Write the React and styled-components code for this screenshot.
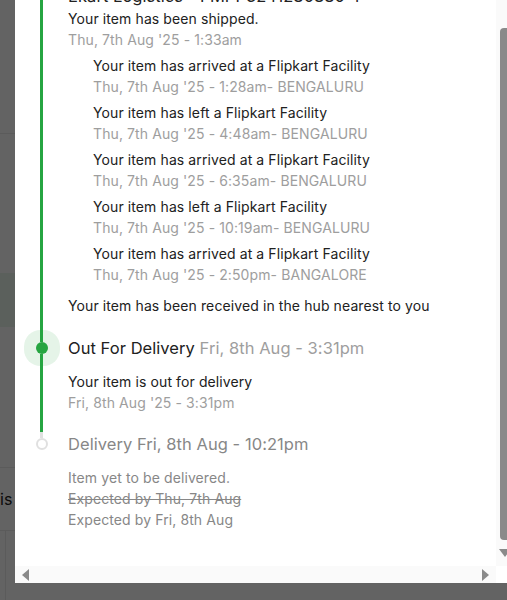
import React, { useLayoutEffect, useRef } from "react";
import styled, { createGlobalStyle, css } from "styled-components";

const GlobalStyle = createGlobalStyle`
  html, body { margin: 0; padding: 0; height: 100%; overflow: hidden; }
  body { background: #fff; font-family: Inter, "Noto Sans", sans-serif; color: #212121; }
  * { box-sizing: border-box; }
`;

const GREEN = "#26a541";
const BAR = "#8a8a8a";
const TRACK = "#fafafa";

/* ---------- page behind the modal ---------- */
const Page = styled.div`
  display: flex;
  flex-direction: column;
  height: 600px;
`;

const PageBand = styled.div`
  flex: ${(p) => (p.$h ? "none" : 1)};
  height: ${(p) => (p.$h ? `${p.$h}px` : "auto")};
  background: ${(p) => p.$tint || "#fff"};
  border-bottom: ${(p) => (p.$line ? "1px solid #ebebeb" : "none")};
  display: flex;
  align-items: center;
  font-size: 16px;
  color: #212121;
`;

const PageCell = styled.div`
  width: 6px;
  align-self: stretch;
  border-right: 1px solid #ebebeb;
`;

const Overlay = styled.div`
  position: fixed;
  inset: 0;
  background: rgba(0, 0, 0, 0.61);
`;

/* ---------- modal ---------- */
const Panel = styled.div`
  position: fixed;
  left: 15px;
  top: -67px;
  bottom: 17px;
  width: 498px;
  background: #fff;
  display: grid;
  grid-template-columns: 1fr 17px;
  grid-template-rows: 1fr 17px;
`;

const Viewport = styled.div`
  overflow: hidden;
  min-height: 0;
`;

/* scrollbars */
const VBar = styled.div`
  display: flex;
  flex-direction: column;
  background: ${TRACK};
`;

const VTrack = styled.div`
  flex: 1;
  display: flex;
  flex-direction: column;
  justify-content: flex-end;
  padding: 0 2px 0 4px;
`;

const VThumb = styled.div`
  height: ${(p) => p.$size}px;
  background: ${BAR};
  border-radius: 4px;
`;

const VButton = styled.div`
  flex: none;
  height: ${(p) => p.$h}px;
  display: flex;
  justify-content: center;
  align-items: flex-start;
  padding-top: ${(p) => p.$pad}px;
`;

const HBar = styled.div`
  display: flex;
  align-items: stretch;
  background: ${TRACK};
`;

const HTrack = styled.div`
  flex: 1;
`;

const HButton = styled.div`
  flex: none;
  width: 17px;
  display: flex;
  align-items: center;
  padding-left: ${(p) => p.$pad}px;
`;

const Corner = styled.div`
  background: #fff;
`;

const arrows = {
  up: css`
    border-left: 6px solid transparent;
    border-right: 6px solid transparent;
    border-bottom: 8px solid ${BAR};
  `,
  down: css`
    border-left: 6px solid transparent;
    border-right: 6px solid transparent;
    border-top: 8px solid ${BAR};
  `,
  left: css`
    border-top: 6px solid transparent;
    border-bottom: 6px solid transparent;
    border-right: 7px solid ${BAR};
  `,
  right: css`
    border-top: 6px solid transparent;
    border-bottom: 6px solid transparent;
    border-left: 7px solid ${BAR};
  `,
};

const Arrow = styled.span`
  width: 0;
  height: 0;
  ${(p) => arrows[p.$dir]}
`;

/* timeline */
const Timeline = styled.div`
  padding: 20px 0 0 15px;
`;

const Step = styled.div`
  display: grid;
  grid-template-columns: 23px 1fr;
  column-gap: 15px;
`;

const Rail = styled.div`
  display: flex;
  flex-direction: column;
  align-items: center;
`;

const Segment = styled.div`
  width: 3px;
  flex: ${(p) => (p.$grow ? 1 : "none")};
  height: ${(p) => (p.$grow ? "auto" : "6px")};
  background: ${(p) => p.$color || "transparent"};
`;

const dotKinds = {
  done: css`
    background: ${GREEN};
  `,
  current: css`
    background: ${GREEN};
    box-shadow: 0 0 0 12px rgba(38, 165, 65, 0.12);
  `,
  pending: css`
    background: #fff;
    border: 2px solid #e0e0e0;
  `,
};

const Dot = styled.div`
  flex: none;
  width: 12px;
  height: 12px;
  border-radius: 50%;
  ${(p) => dotKinds[p.$kind]}
`;

const Body = styled.div`
  padding-bottom: ${(p) => p.$pb}px;
  min-width: 0;
`;

const Header = styled.div`
  font-size: 16.5px;
  letter-spacing: 0.05px;
  line-height: 24px;
  color: ${(p) => (p.$muted ? "#878787" : "#212121")};
  margin-bottom: 11px;
  white-space: nowrap;
`;

const HeaderTime = styled.span`
  color: ${(p) => (p.$muted ? "#878787" : "#9e9e9e")};
`;

const Carrier = styled.div`
  font-size: 16.5px;
  letter-spacing: 0.05px;
  line-height: 24px;
  white-space: nowrap;
  color: #212121;
`;

const Line = styled.div`
  font-size: 14px;
  letter-spacing: 0.1px;
  line-height: 21px;
  white-space: nowrap;
  color: ${(p) =>
    p.$tone === "sub" ? "#9e9e9e" : p.$tone === "muted" ? "#878787" : "#212121"};
  text-decoration: ${(p) => (p.$strike ? "line-through" : "none")};
`;

const Nested = styled.div`
  margin: 0 0 10px 25px;
`;

const NestedItem = styled.div`
  margin-top: 5px;
`;

const hubEvents = [
  ["Your item has arrived at a Flipkart Facility", "Thu, 7th Aug '25 - 1:28am- BENGALURU"],
  ["Your item has left a Flipkart Facility", "Thu, 7th Aug '25 - 4:48am- BENGALURU"],
  ["Your item has arrived at a Flipkart Facility", "Thu, 7th Aug '25 - 6:35am- BENGALURU"],
  ["Your item has left a Flipkart Facility", "Thu, 7th Aug '25 - 10:19am- BENGALURU"],
  ["Your item has arrived at a Flipkart Facility", "Thu, 7th Aug '25 - 2:50pm- BANGALORE"],
];

function TrackStep({ kind, top, bottom, title, time, muted, pb, children }) {
  return (
    <Step>
      <Rail>
        <Segment $color={top} />
        <Dot $kind={kind} />
        {bottom && <Segment $grow $color={bottom} />}
      </Rail>
      <Body $pb={pb}>
        <Header $muted={muted}>
          {title} <HeaderTime $muted={muted}>{time}</HeaderTime>
        </Header>
        {children}
      </Body>
    </Step>
  );
}

export default function App() {
  const ref = useRef(null);
  useLayoutEffect(() => {
    if (ref.current) ref.current.scrollTop = ref.current.scrollHeight;
  }, []);

  return (
    <>
      <GlobalStyle />
      <Page>
        <PageBand $h={134} $line />
        <PageBand $h={139} />
        <PageBand $h={54} $tint="#ebf7ed" />
        <PageBand $h={141} $line />
        <PageBand $h={63} $line>is</PageBand>
        <PageBand>
          <PageCell />
        </PageBand>
      </Page>
      <Overlay />
      <Panel>
        <Viewport ref={ref}>
          <Timeline>
            <TrackStep kind="done" bottom={GREEN} title="Order Confirmed" time="Wed, 6th Aug - 11:09pm" pb={20}>
              <Line>Your Order has been placed.</Line>
              <Line $tone="sub">Wed, 6th Aug '25 - 11:09pm</Line>
            </TrackStep>
            <TrackStep kind="done" top={GREEN} bottom={GREEN} title="Shipped" time="Thu, 7th Aug - 1:33am" pb={20}>
              <Carrier>Ekart Logistics - FMPP3241280880 4</Carrier>
              <Line>Your item has been shipped.</Line>
              <Line $tone="sub">Thu, 7th Aug '25 - 1:33am</Line>
              <Nested>
                {hubEvents.map(([t, d], i) => (
                  <NestedItem key={i}>
                    <Line>{t}</Line>
                    <Line $tone="sub">{d}</Line>
                  </NestedItem>
                ))}
              </Nested>
              <Line>Your item has been received in the hub nearest to you</Line>
            </TrackStep>
            <TrackStep kind="current" top={GREEN} bottom={GREEN} title="Out For Delivery" time="Fri, 8th Aug - 3:31pm" pb={19}>
              <Line>Your item is out for delivery</Line>
              <Line $tone="sub">Fri, 8th Aug '25 - 3:31pm</Line>
            </TrackStep>
            <TrackStep kind="pending" top="#e0e0e0" muted title="Delivery" time="Fri, 8th Aug - 10:21pm" pb={35.5}>
              <Line $tone="muted">Item yet to be delivered.</Line>
              <Line $tone="muted" $strike>Expected by Thu, 7th Aug</Line>
              <Line $tone="muted">Expected by Fri, 8th Aug</Line>
            </TrackStep>
          </Timeline>
        </Viewport>
        <VBar>
          <VButton $h={17} $pad={4}>
            <Arrow $dir="up" />
          </VButton>
          <VTrack>
            <VThumb $size={512} />
          </VTrack>
          <VButton $h={26} $pad={9}>
            <Arrow $dir="down" />
          </VButton>
        </VBar>
        <HBar>
          <HButton $pad={7}>
            <Arrow $dir="left" />
          </HButton>
          <HTrack />
          <HButton $pad={3}>
            <Arrow $dir="right" />
          </HButton>
        </HBar>
        <Corner />
      </Panel>
    </>
  );
}
